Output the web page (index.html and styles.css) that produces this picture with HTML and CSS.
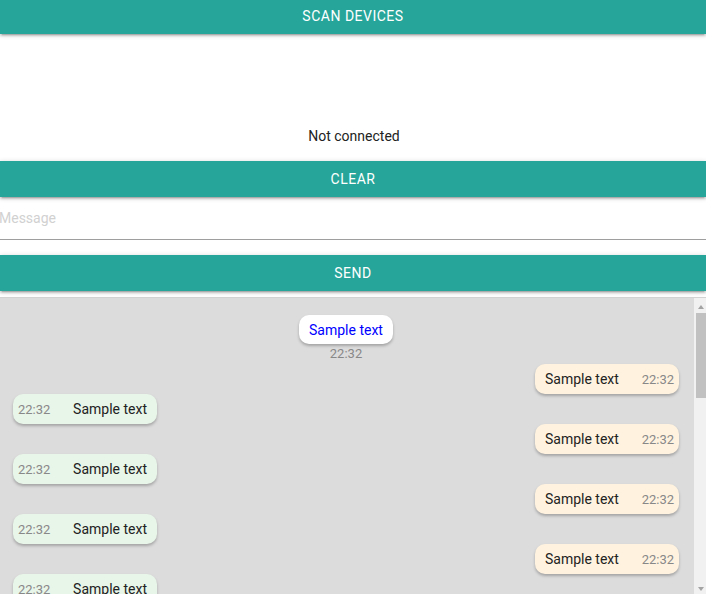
FILE: index.html
```html
<!DOCTYPE html>
<html lang="en">
<head>
<meta charset="utf-8">
<title>Bluetooth Chat</title>
<link rel="stylesheet" href="styles.css">
</head>
<body>
<div class="app">
  <div class="btn btn-top">Scan devices</div>
  <div class="status">Not connected</div>
  <div class="btn">Clear</div>
  <input class="msg-input" type="text" placeholder="Message">
  <div class="btn btn-send">Send</div>
  <div class="chat">
    <div class="chat-list">
      <div class="sys">
        <div class="bubble bubble-sys">Sample text</div>
        <div class="sys-time">22:32</div>
      </div>
      <div class="row out"><div class="bubble bubble-out"><span class="txt">Sample text</span><span class="time">22:32</span></div></div>
      <div class="row in"><div class="bubble bubble-in"><span class="time">22:32</span><span class="txt">Sample text</span></div></div>
      <div class="row out"><div class="bubble bubble-out"><span class="txt">Sample text</span><span class="time">22:32</span></div></div>
      <div class="row in"><div class="bubble bubble-in"><span class="time">22:32</span><span class="txt">Sample text</span></div></div>
      <div class="row out"><div class="bubble bubble-out"><span class="txt">Sample text</span><span class="time">22:32</span></div></div>
      <div class="row in"><div class="bubble bubble-in"><span class="time">22:32</span><span class="txt">Sample text</span></div></div>
      <div class="row out"><div class="bubble bubble-out"><span class="txt">Sample text</span><span class="time">22:32</span></div></div>
      <div class="row in"><div class="bubble bubble-in"><span class="time">22:32</span><span class="txt">Sample text</span></div></div>
      <div class="row out"><div class="bubble bubble-out"><span class="txt">Sample text</span><span class="time">22:32</span></div></div>
      <div class="row in"><div class="bubble bubble-in"><span class="time">22:32</span><span class="txt">Sample text</span></div></div>
    </div>
    <div class="scrollbar">
      <div class="sb-btn sb-up"><span class="tri-up"></span></div>
      <div class="sb-track"><div class="sb-thumb"></div></div>
      <div class="sb-btn sb-down"><span class="tri-down"></span></div>
    </div>
  </div>
</div>
</body>
</html>
```

FILE: styles.css
```css
html, body {
  margin: 0;
  padding: 0;
  height: 100%;
  overflow: hidden;
}

body {
  font-family: Roboto, "Liberation Sans", sans-serif;
  color: rgba(0, 0, 0, 0.87);
  background: #ffffff;
}

.app {
  display: flex;
  flex-direction: column;
  height: 100vh;
}

.btn {
  flex: none;
  height: 36px;
  line-height: 36px;
  background: #26a69a;
  color: #ffffff;
  text-align: center;
  text-transform: uppercase;
  font-size: 14px;
  letter-spacing: 0.5px;
  box-shadow: 0 2px 2px 0 rgba(0, 0, 0, 0.14), 0 3px 1px -2px rgba(0, 0, 0, 0.12), 0 1px 5px 0 rgba(0, 0, 0, 0.2);
  position: relative;
  z-index: 1;
}

.btn-top {
  margin-top: -2px;
}

.status {
  flex: none;
  padding-top: 90px;
  padding-left: 2px;
  height: 24px;
  line-height: 24px;
  margin-bottom: 13px;
  text-align: center;
  font-size: 14px;
  color: #222;
}

.msg-input {
  flex: none;
  display: block;
  box-sizing: border-box;
  width: 100%;
  height: 43px;
  margin: 0 0 15px 0;
  padding: 0;
  text-indent: -1px;
  border: none;
  border-bottom: 1px solid #9e9e9e;
  outline: none;
  background: transparent;
  font-family: Roboto, "Liberation Sans", sans-serif;
  font-size: 14px;
  color: rgba(0, 0, 0, 0.87);
}

.msg-input::placeholder {
  color: #d1d1d1;
}

.btn-send {
  margin-bottom: 6px;
}

.chat {
  flex: 1;
  min-height: 0;
  display: flex;
  background: #dcdcdc;
  border-top: 1px solid #d2d2d2;
}

.chat-list {
  flex: 1;
  min-width: 0;
  overflow: hidden;
  padding-top: 17px;
}

.sys {
  display: flex;
  flex-direction: column;
  align-items: center;
  padding-right: 2px;
}

.bubble {
  display: flex;
  align-items: center;
  height: 30px;
  box-sizing: border-box;
  border-radius: 10px;
  font-size: 14px;
  box-shadow: 0 2px 3px rgba(0, 0, 0, 0.25);
}

.bubble-sys {
  height: 29px;
  padding: 0 10px;
  background: #ffffff;
  color: #0000ff;
}

.sys-time {
  height: 20px;
  line-height: 20px;
  font-size: 13px;
  color: #888888;
}

.row {
  display: flex;
  height: 30px;
}

.row.out {
  justify-content: flex-end;
  padding-right: 15px;
}

.row.in {
  justify-content: flex-start;
  padding-left: 13px;
}

.bubble-out {
  width: 144px;
  padding: 0 5px 0 10px;
  background: #fff3e0;
  justify-content: space-between;
  color: #222;
}

.bubble-in {
  width: 144px;
  padding: 0 10px 0 5px;
  background: #e8f5e9;
  justify-content: space-between;
  color: #222;
}

.time {
  font-size: 13px;
  color: #888888;
}

.scrollbar {
  flex: none;
  width: 12px;
  display: flex;
  flex-direction: column;
  background: #f1f1f1;
}

.sb-btn {
  flex: none;
  height: 15px;
  box-sizing: border-box;
  padding-left: 4px;
}

.sb-up {
  padding-top: 7px;
}

.sb-down {
  padding-top: 8px;
}

.tri-up,
.tri-down {
  display: block;
  width: 0;
  height: 0;
  border-left: 3.5px solid transparent;
  border-right: 3.5px solid transparent;
}

.tri-up {
  border-bottom: 4px solid #a3a3a3;
}

.tri-down {
  border-top: 4px solid #a3a3a3;
}

.sb-track {
  flex: 1;
  min-height: 0;
}

.sb-thumb {
  margin-left: 2px;
  height: 85px;
  background: #c1c1c1;
}
```
